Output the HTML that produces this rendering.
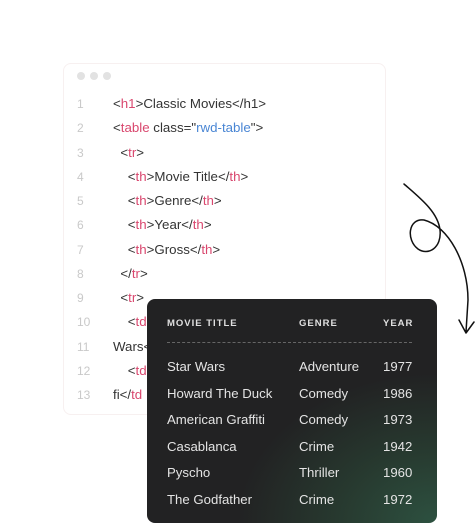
<!DOCTYPE html>
<html><head><meta charset="utf-8"><style>
*{margin:0;padding:0;box-sizing:border-box}
body{width:475px;height:525px;background:#fff;position:relative;overflow:hidden;font-family:"Liberation Sans",sans-serif}
.card{position:absolute;left:63px;top:63px;width:323px;height:352px;border:1px solid #f7f0f0;border-radius:8px;background:#fff}
.dot{position:absolute;top:72px;width:8px;height:8px;border-radius:50%;background:#e2e2e2}
.ln{position:absolute;left:77px;font-size:12px;color:#c9c9c9}
.code{position:absolute;left:113px;font-size:13.3px;color:#333;white-space:pre}
.r{color:#d9476e}.b{color:#4a86d4}
.panel{position:absolute;left:147px;top:299px;width:290px;height:224px;border-radius:8px;
background:radial-gradient(ellipse 200px 150px at 290px 224px,#2d5140 0%,#27392f 50%,rgba(35,35,35,0) 100%),#222223}
.th{position:absolute;top:318px;font-size:9.5px;font-weight:bold;letter-spacing:1px;color:#e0e0e0}
.dash{position:absolute;left:167px;top:342px;width:245px;border-top:1px dashed #666}
.td{position:absolute;font-size:13.2px;color:#e4e4e4}
</style></head><body>
<div class="card"></div>
<div class="dot" style="left:77px"></div><div class="dot" style="left:90px"></div><div class="dot" style="left:103px"></div>
<div class="ln" style="top:97px">1</div><div class="code" style="top:96px">&lt;<span class="r">h1</span>&gt;Classic Movies&lt;/h1&gt;</div>
<div class="ln" style="top:121px">2</div><div class="code" style="top:120px">&lt;<span class="r">table</span> class="<span class="b">rwd-table</span>"&gt;</div>
<div class="ln" style="top:146px">3</div><div class="code" style="top:145px">  &lt;<span class="r">tr</span>&gt;</div>
<div class="ln" style="top:170px">4</div><div class="code" style="top:169px">    &lt;<span class="r">th</span>&gt;Movie Title&lt;/<span class="r">th</span>&gt;</div>
<div class="ln" style="top:194px">5</div><div class="code" style="top:193px">    &lt;<span class="r">th</span>&gt;Genre&lt;/<span class="r">th</span>&gt;</div>
<div class="ln" style="top:218px">6</div><div class="code" style="top:217px">    &lt;<span class="r">th</span>&gt;Year&lt;/<span class="r">th</span>&gt;</div>
<div class="ln" style="top:243px">7</div><div class="code" style="top:242px">    &lt;<span class="r">th</span>&gt;Gross&lt;/<span class="r">th</span>&gt;</div>
<div class="ln" style="top:267px">8</div><div class="code" style="top:266px">  &lt;/<span class="r">tr</span>&gt;</div>
<div class="ln" style="top:291px">9</div><div class="code" style="top:290px">  &lt;<span class="r">tr</span>&gt;</div>
<div class="ln" style="top:315px">10</div><div class="code" style="top:314px">    &lt;<span class="r">td</span></div>
<div class="ln" style="top:340px">11</div><div class="code" style="top:339px">Wars&lt;</div>
<div class="ln" style="top:364px">12</div><div class="code" style="top:363px">    &lt;<span class="r">td</span></div>
<div class="ln" style="top:388px">13</div><div class="code" style="top:387px">fi&lt;/<span class="r">td</span></div>
<svg style="position:absolute;left:0;top:0" width="475" height="525"><path d="M404,184 C420,198 438,212 440,230 C442,248 428,256 418,249 C406,240 408,218 424,220 C448,226 468,262 468,300 L466,332 M459,320 L466,333 L474,322" fill="none" stroke="#111" stroke-width="1.5" stroke-linecap="round" stroke-linejoin="round"/></svg>
<div class="panel"></div>
<div class="th" style="left:167px">MOVIE TITLE</div><div class="th" style="left:299px">GENRE</div><div class="th" style="left:383px">YEAR</div>
<div class="dash"></div>
<div class="td" style="left:167px;top:359px">Star Wars</div><div class="td" style="left:299px;top:359px">Adventure</div><div class="td" style="left:383px;top:359px">1977</div>
<div class="td" style="left:167px;top:386px">Howard The Duck</div><div class="td" style="left:299px;top:386px">Comedy</div><div class="td" style="left:383px;top:386px">1986</div>
<div class="td" style="left:167px;top:412px">American Graffiti</div><div class="td" style="left:299px;top:412px">Comedy</div><div class="td" style="left:383px;top:412px">1973</div>
<div class="td" style="left:167px;top:439px">Casablanca</div><div class="td" style="left:299px;top:439px">Crime</div><div class="td" style="left:383px;top:439px">1942</div>
<div class="td" style="left:167px;top:465px">Pyscho</div><div class="td" style="left:299px;top:465px">Thriller</div><div class="td" style="left:383px;top:465px">1960</div>
<div class="td" style="left:167px;top:492px">The Godfather</div><div class="td" style="left:299px;top:492px">Crime</div><div class="td" style="left:383px;top:492px">1972</div>
</body></html>
